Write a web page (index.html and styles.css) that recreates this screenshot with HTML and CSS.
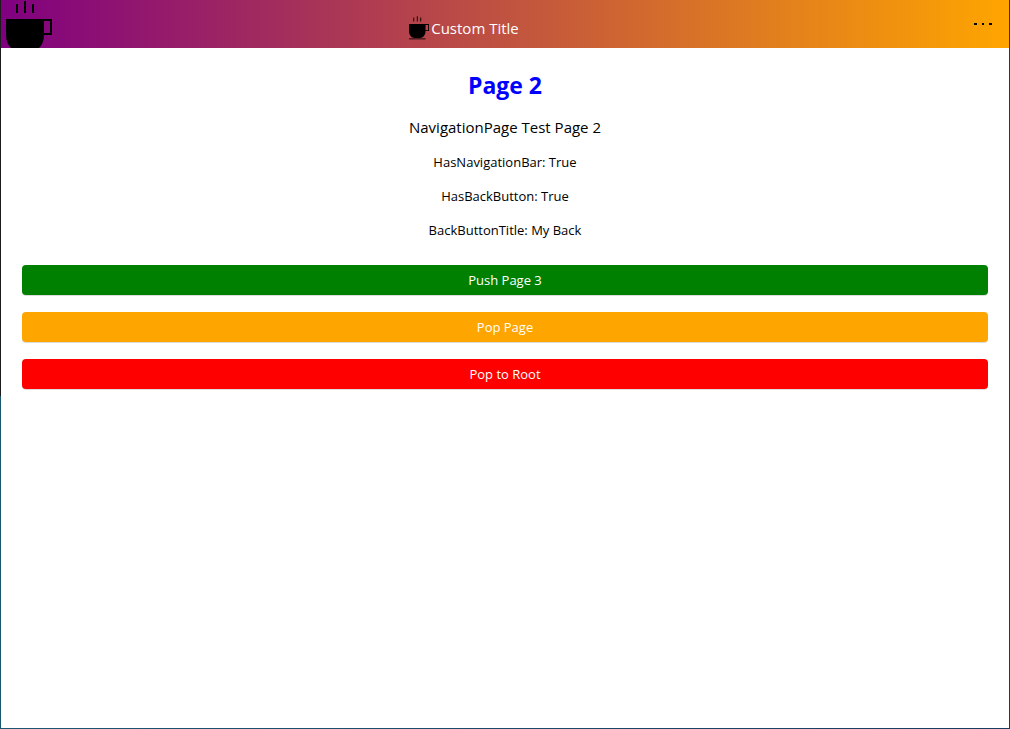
FILE: index.html
```html
<!DOCTYPE html>
<html lang="en">
<head>
<meta charset="utf-8">
<meta name="viewport" content="width=device-width, initial-scale=1">
<title>Page 2</title>
<link rel="stylesheet" href="styles.css">
</head>
<body>
<svg class="symbols" aria-hidden="true">
  <symbol id="cup" viewBox="0 0 46 54">
    <path d="M10 3h2v9h-2zM18 0h2v12h-2zM26 3h2v9h-2z"/>
    <path d="M0 18h46v16h-8C38 44 32 50 25 50H13C6 50 0 44 0 34zM38 20v12h6V20z" fill-rule="evenodd"/>
    <path d="M0 51h38v2H0z"/>
  </symbol>
</svg>
<div class="window">
  <header class="navbar">
    <button class="back" type="button" aria-label="Back"><svg class="cup-large"><use href="#cup"/></svg></button>
    <div class="title"><svg class="cup-small"><use href="#cup"/></svg><span>Custom Title</span></div>
    <button class="more" type="button" aria-label="More options"><svg class="dots" viewBox="0 0 20 4"><path d="M1 1h3v2H1zM9 1h2v2H9zM16 1h3v2h-3z"/></svg></button>
  </header>
  <main class="page">
    <h1 class="heading">Page 2</h1>
    <p class="subtitle">NavigationPage Test Page 2</p>
    <p class="status">HasNavigationBar: True</p>
    <p class="status">HasBackButton: True</p>
    <p class="status">BackButtonTitle: My Back</p>
    <div class="actions">
      <button class="action push" type="button">Push Page 3</button>
      <button class="action pop" type="button">Pop Page</button>
      <button class="action root" type="button">Pop to Root</button>
    </div>
  </main>
</div>
</body>
</html>
```
FILE: styles.css
```css
* {
  box-sizing: border-box;
}

body {
  margin: 0;
  font-family: "Segoe UI", "Open Sans", sans-serif;
  color: #000;
  background: #fff;
}

button {
  border: 0;
  padding: 0;
  font: inherit;
  background: none;
}

svg {
  display: block;
}

.symbols {
  position: absolute;
  width: 0;
  height: 0;
}

.window {
  display: flex;
  flex-direction: column;
  min-height: 100vh;
  padding: 0 1px 1px;
  background:
    linear-gradient(#fff, #fff) content-box,
    linear-gradient(#1c1a1d 396px, transparent 396px) left / 1px 100% no-repeat,
    linear-gradient(90deg, #1a5870, #1b3b5f);
}

.navbar {
  display: grid;
  grid-template-columns: 1fr auto 1fr;
  grid-template-rows: 48px;
  overflow: hidden;
  background: linear-gradient(90deg, purple, orange);
}

.back {
  justify-self: start;
  align-self: start;
  padding: 1px 5px 0;
}

.cup-large {
  width: 46px;
  height: 54px;
}

.title {
  display: flex;
  align-items: center;
  gap: 2px;
  padding-top: 8px;
  padding-right: 82px;
  font-size: 15px;
  line-height: 24px;
  color: #fff;
}

.cup-small {
  width: 20px;
  height: 24px;
}

.cup-large,
.cup-small,
.dots {
  fill: #000;
}

.more {
  justify-self: end;
  padding: 0 16px;
}

.dots {
  width: 20px;
  height: 4px;
}

.page {
  display: flex;
  flex-direction: column;
  gap: 14px;
  padding: 21px;
  text-align: center;
}

.heading,
.subtitle,
.status {
  margin: 0;
}

.heading {
  font-size: 23px;
  line-height: 33px;
  color: blue;
}

.subtitle {
  font-size: 15px;
  line-height: 22px;
}

.status {
  font-size: 13px;
  line-height: 20px;
}

.actions {
  display: flex;
  flex-direction: column;
  gap: 17px;
  padding-top: 11px;
}

.action {
  height: 30px;
  border-radius: 4px;
  font-size: 13px;
  line-height: 20px;
  color: #fff;
  box-shadow: 0 1px #dcdcdc;
}

.push {
  background: green;
}

.pop {
  background: orange;
}

.root {
  background: red;
}
```
